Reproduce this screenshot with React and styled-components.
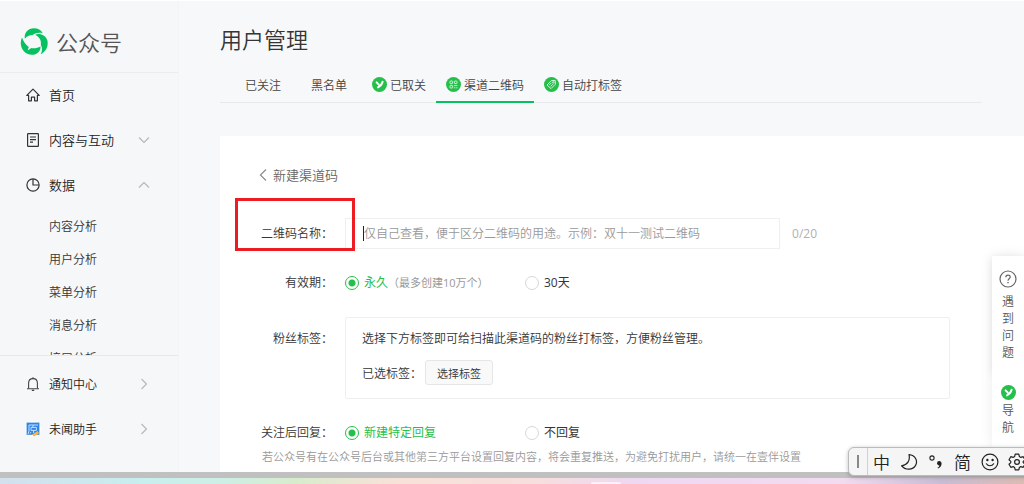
import React, { useState } from "react";
import styled, { createGlobalStyle } from "styled-components";

const SUB_MENU = ["内容分析", "用户分析", "菜单分析", "消息分析", "接口分析"];

function Chevron({ dir }) {
    const paths = {
        down: "M1 3.5 L6 8.5 L11 3.5",
        up: "M1 8.5 L6 3.5 L11 8.5",
        right: "M3.5 1 L8.5 6 L3.5 11",
        left: "M7 0.5 L1.4 6 L7 11.5",
    };
    return (
        <svg width="12" height="12" viewBox="0 0 12 12" fill="none" stroke={dir === "left" ? "#888" : "#b4b6b9"} strokeWidth="1.1" aria-hidden="true">
            <path d={paths[dir]} />
        </svg>
    )
}

function BrandLogo() {
    return (
        <svg width="28" height="28" viewBox="0 0 28 28" aria-hidden="true">
            <g fill="#07c160">
                <path d="M4.8 10.8 C4 4.6 8 0.3 14 0.3 C18 0.3 21 2 22.8 5.2 C19 4.2 15.5 4.8 12.6 7 C9.5 7 6.8 8.2 4.8 10.8 Z" />
                <path d="M15 6.8 C20 4.8 25.6 7.2 27.4 12.5 C28.6 18 26 23.6 20.6 26.2 C22.4 22.6 22.6 20 20.8 17 C21.6 12.6 19.4 8.6 15 6.8 Z" />
                <path d="M2 9.6 C3.4 13.4 5.4 16.6 8.8 19 L7.6 22.4 L11.4 20 C14.4 20.6 17.6 20 20.6 18.4 C20.6 23 17 26.8 12 26.8 C3.6 26.8 -1.8 17.6 2 9.6 Z" />
            </g>
        </svg>
    )
}

function HomeIcon() {
    return (
        <svg width="14" height="14" viewBox="0 0 14 14" fill="none" stroke="#333" strokeWidth="1.2" strokeLinejoin="round" aria-hidden="true">
            <path d="M0.8 7.4 L7 1.2 L13.2 7.4 H11.4 V12.8 H8.6 V9.2 H5.4 V12.8 H2.6 V7.4 Z" />
        </svg>
    )
}

function DocIcon() {
    return (
        <svg width="14" height="14" viewBox="0 0 14 14" fill="none" stroke="#333" strokeWidth="1.2" aria-hidden="true">
            <rect x="1.6" y="0.6" width="10.8" height="12.8" rx="0.6" />
            <path d="M4 4 H10 M4 6.6 H10 M4 9.2 H7" />
        </svg>
    )
}

function PieIcon() {
    return (
        <svg width="14" height="14" viewBox="0 0 14 14" fill="none" stroke="#333" strokeWidth="1.2" aria-hidden="true">
            <circle cx="7" cy="7" r="6.1" />
            <path d="M7 0.9 V7 H13.1" />
        </svg>
    )
}

function BellIcon() {
    return (
        <svg width="14" height="14" viewBox="0 0 14 14" fill="none" stroke="#444" strokeWidth="1.1" aria-hidden="true">
            <path d="M2.6 11.6 V6.2 C2.6 3.4 4.4 1.6 7 1.6 C9.6 1.6 11.4 3.4 11.4 6.2 V11.6" />
            <path d="M1 11.8 H13 M7 0.2 V1.6 M5.8 13.4 H8.2" />
        </svg>
    )
}

function HelperIcon() {
    return (
        <svg width="16" height="16" viewBox="0 0 16 16" aria-hidden="true">
            <circle cx="8" cy="8" r="8" fill="#fff" />
            <rect x="1.6" y="1.6" width="12.8" height="12.2" fill="#2f86e6" />
            <path d="M4 4 H13 M4 4 V10 L3 13 M8.5 4 L7.5 6 M6 6.4 H11.4 V9.4 H6 Z M8.6 9.4 V12 M6 11 L5.2 12.4" fill="none" stroke="#d5e9ff" strokeWidth="0.9" />
            <path d="M7 13.4 L12.8 10 L14 12.2 L9 15.4 Z" fill="#f7b545" />
        </svg>
    )
}

function YIcon() {
    return (
        <svg width="15" height="15" viewBox="0 0 15 15" aria-hidden="true">
            <circle cx="7.5" cy="7.5" r="7.5" fill="#25bf4b" />
            <path d="M4.6 5.4 L6.6 7.4 M10.6 4.8 C10 7 8.4 9.2 6 10.4" fill="none" stroke="#fff" strokeWidth="2" strokeLinecap="round" />
        </svg>
    )
}

function QrIcon() {
    return (
        <svg width="15" height="15" viewBox="0 0 15 15" aria-hidden="true">
            <circle cx="7.5" cy="7.5" r="7.5" fill="#25bf4b" />
            <g fill="none" stroke="#d9f5df" strokeWidth="0.9">
                <rect x="4" y="4" width="2.6" height="2.6" rx="0.5" />
                <rect x="8.4" y="4" width="2.6" height="2.6" rx="0.5" />
                <rect x="4" y="8.4" width="2.6" height="2.6" rx="0.5" />
                <path d="M8 8.6 H11.4 M8 10.8 H9.4 M10.2 10.8 H11.4" />
            </g>
        </svg>
    )
}

function TagIcon() {
    return (
        <svg width="15" height="15" viewBox="0 0 15 15" aria-hidden="true">
            <circle cx="7.5" cy="7.5" r="7.5" fill="#25bf4b" />
            <g fill="none" stroke="#e4f8e8" strokeWidth="0.9" strokeLinejoin="round">
                <path d="M3 8 L7.4 3.6 L11.2 3.4 L11.4 7.2 L7 11.6 Z" />
                <circle cx="9.4" cy="5.4" r="0.8" />
                <path d="M5.2 8 L7.4 5.8 M6.6 9.4 L8.8 7.2" />
            </g>
        </svg>
    )
}

function QuestionIcon() {
    return (
        <svg width="18" height="18" viewBox="0 0 18 18" fill="none" stroke="#666" strokeWidth="1.2" aria-hidden="true">
            <circle cx="9" cy="9" r="8" />
            <path d="M6.8 7.2 C6.8 4.4 11.2 4.4 11.2 7.1 C11.2 8.8 9 8.8 9 10.8" />
            <path d="M9 12 V13.3" strokeWidth="1.4" />
        </svg>
    )
}

function MoonIcon() {
    return (
        <svg width="18" height="18" viewBox="0 0 18 18" fill="none" stroke="#222" strokeWidth="1.2" strokeLinejoin="round" aria-hidden="true">
            <path d="M9 1.6 C15.4 2 18 8 15.6 12.4 C12.8 17.2 5.4 17.4 1.6 12.8 C7.4 12 10.4 7.6 9 1.6 Z" />
        </svg>
    )
}

function PunctIcon() {
    return (
        <svg width="16" height="18" viewBox="0 0 16 18" aria-hidden="true">
            <circle cx="4" cy="5" r="2.1" fill="none" stroke="#222" strokeWidth="1.1" />
            <path d="M9 10.2 A2.3 2.3 0 1 1 13.6 10.4 C13.6 12.8 12 14.8 10 15.4 L9.6 14.6 C10.8 14 11.4 13.2 11.4 12.4 C10 12.4 9 11.4 9 10.2 Z" fill="#222" />
        </svg>
    )
}

function SmileIcon() {
    return (
        <svg width="18" height="18" viewBox="0 0 18 18" fill="none" stroke="#222" strokeWidth="1.2" strokeLinecap="round" aria-hidden="true">
            <circle cx="9" cy="9" r="7.9" />
            <path d="M5.4 10.8 C7 13.4 11 13.4 12.6 10.8" />
            <circle cx="6.4" cy="7" r="0.6" fill="#222" />
            <circle cx="11.6" cy="7" r="0.6" fill="#222" />
        </svg>
    )
}

function GearIcon() {
    return (
        <svg width="18" height="18" viewBox="0 0 18 18" fill="none" stroke="#222" strokeWidth="1.2" strokeLinejoin="round" aria-hidden="true">
            <path d="M7.2 1.2 H10.8 L11.4 3.6 L12.8 4.4 L15.2 3.7 L17 6.8 L15.2 8.4 V9.6 L17 11.2 L15.2 14.3 L12.8 13.6 L11.4 14.4 L10.8 16.8 H7.2 L6.6 14.4 L5.2 13.6 L2.8 14.3 L1 11.2 L2.8 9.6 V8.4 L1 6.8 L2.8 3.7 L5.2 4.4 L6.6 3.6 Z" />
            <circle cx="9" cy="9" r="2.4" />
        </svg>
    )
}

function Sidebar() {
    return (
        <Side>
            <Brand>
                <BrandLogo />
                <BrandName>公众号</BrandName>
            </Brand>
            <Nav>
                <NavItem href="#home"><HomeIcon /><NavText>首页</NavText></NavItem>
                <NavItem href="#content"><DocIcon /><NavText>内容与互动</NavText><Chevron dir="down" /></NavItem>
                <NavItem href="#data"><PieIcon /><NavText>数据</NavText><Chevron dir="up" /></NavItem>
                <SubList>
                    {SUB_MENU.map((name) => (
                        <li key={name}><SubItem href="#data">{name}</SubItem></li>
                    ))}
                </SubList>
            </Nav>
            <SideFooter>
                <NavItem href="#notice" $small><BellIcon /><NavText>通知中心</NavText><Chevron dir="right" /></NavItem>
                <NavItem href="#helper" $small><IconSlot><HelperIcon /></IconSlot><NavText>未闻助手</NavText><Chevron dir="right" /></NavItem>
            </SideFooter>
        </Side>
    )
}

function ChannelForm() {
    const [name, setName] = useState("");
    const [period, setPeriod] = useState("forever");
    const [reply, setReply] = useState("new");

    return (
        <Card>
            <BackLink href="#channel"><Chevron dir="left" />新建渠道码</BackLink>
            <Row>
                <RowLabel as="label" htmlFor="qrname">二维码名称：</RowLabel>
                <NameField>
                    <Caret />
                    <NameInput
                        id="qrname"
                        maxLength={20}
                        value={name}
                        onChange={(e) => setName(e.target.value)}
                        placeholder="仅自己查看，便于区分二维码的用途。示例：双十一测试二维码"
                    />
                </NameField>
                <Counter>{name.length}/20</Counter>
                <Highlight />
            </Row>
            <Row role="radiogroup" aria-labelledby="period">
                <RowLabel id="period">有效期：</RowLabel>
                <Options>
                    <Option $on={period === "forever"}>
                        <Radio name="period" checked={period === "forever"} onChange={() => setPeriod("forever")} />
                        <span>永久<Hint>（最多创建10万个）</Hint></span>
                    </Option>
                    <Option $on={period === "days"}>
                        <Radio name="period" checked={period === "days"} onChange={() => setPeriod("days")} />
                        30天
                    </Option>
                </Options>
            </Row>
            <Row $top>
                <RowLabel $boxed>粉丝标签：</RowLabel>
                <TagBox>
                    <TagText>选择下方标签即可给扫描此渠道码的粉丝打标签，方便粉丝管理。</TagText>
                    <TagLine>已选标签：<PickButton type="button">选择标签</PickButton></TagLine>
                </TagBox>
            </Row>
            <Row role="radiogroup" aria-labelledby="reply">
                <RowLabel id="reply">关注后回复：</RowLabel>
                <Options>
                    <Option $on={reply === "new"}>
                        <Radio name="reply" checked={reply === "new"} onChange={() => setReply("new")} />
                        新建特定回复
                    </Option>
                    <Option $on={reply === "none"}>
                        <Radio name="reply" checked={reply === "none"} onChange={() => setReply("none")} />
                        不回复
                    </Option>
                </Options>
            </Row>
            <Note>若公众号有在公众号后台或其他第三方平台设置回复内容，将会重复推送，为避免打扰用户，请统一在壹伴设置</Note>
        </Card>
    )
}

function App() {
    return (
        <Screen>
            <GlobalStyle />
            <Page>
                <Sidebar />
                <Main>
                    <Title>用户管理</Title>
                    <Tabs>
                        <Tab href="#followed">已关注</Tab>
                        <Tab href="#black">黑名单</Tab>
                        <Tab href="#left" $icon><YIcon />已取关</Tab>
                        <Tab href="#channel" $icon $active><QrIcon />渠道二维码</Tab>
                        <Tab href="#tag" $icon><TagIcon />自动打标签</Tab>
                    </Tabs>
                    <ChannelForm />
                </Main>
                <Dock>
                    <DockButton type="button" $raised><QuestionIcon /><DockText>遇到问题</DockText></DockButton>
                    <DockButton type="button"><YIcon /><DockText>导航</DockText></DockButton>
                </Dock>
            </Page>
            <WindowEdge />
            <Taskbar><TaskTab /></Taskbar>
            <ImeBar>
                <ImeHandle><ImeGrip /></ImeHandle>
                <ImeButton type="button">中</ImeButton>
                <ImeButton type="button" aria-label="半角"><MoonIcon /></ImeButton>
                <ImeButton type="button" aria-label="标点"><PunctIcon /></ImeButton>
                <ImeButton type="button">简</ImeButton>
                <ImeButton type="button" aria-label="表情"><SmileIcon /></ImeButton>
                <ImeButton type="button" aria-label="设置"><GearIcon /></ImeButton>
            </ImeBar>
        </Screen>
    )
}

const GlobalStyle = createGlobalStyle`
* { box-sizing: border-box; }
body {
    margin: 0;
    font-family: "Open Sans", "Noto Sans CJK SC", sans-serif;
    font-size: 12px;
    font-weight: 350;
    color: #353535;
}
a { color: inherit; text-decoration: none; }
button, input { font: inherit; color: inherit; }
svg { flex: none; display: block; }`

const Screen = styled.div`
position: relative;
display: flex;
flex-direction: column;
height: 100vh;
overflow: hidden;`

const Page = styled.div`
position: relative;
display: flex;
flex: 1;
min-height: 0;
overflow: hidden;
border-top: 1px solid #fff;
background-color: #f7f8fa;`

const Side = styled.aside`
display: flex;
flex-direction: column;
flex: none;
width: 179px;
background-color: #f6f7f9;
border-right: 1px solid #f3f4f6;`

const Brand = styled.div`
display: flex;
align-items: center;
gap: 8px;
height: 72px;
padding: 10px 20px 0;
flex: none;
border-bottom: 1px solid #ebecee;`

const BrandName = styled.span`
font-size: 22px;
line-height: 28px;
color: #555;`

const Nav = styled.nav`
flex: 1;
min-height: 0;
overflow: hidden;`

const NavItem = styled.a`
display: flex;
align-items: center;
gap: 9px;
height: 45px;
padding: 0 28px ${(props) => (props.$small ? "0" : "2px")} 26px;
font-size: ${(props) => (props.$small ? "12px" : "13px")};
color: #222;`

const NavText = styled.span`
flex: 1;`

const IconSlot = styled.span`
margin: 0 -1px;`

const SubList = styled.ul`
list-style: none;
margin: 0;
padding: 2px 0 0 49px;`

const SubItem = styled.a`
display: block;
line-height: 33px;`

const SideFooter = styled.div`
flex: none;
padding: 5px 0 21px;
border-top: 1px solid #e7e8ea;`

const Main = styled.main`
display: flex;
flex-direction: column;
flex: 1;
min-width: 0;
padding: 22px 0 0 41px;`

const Title = styled.h1`
margin: 0;
font-size: 22px;
font-weight: 350;
line-height: 32px;`

const Tabs = styled.nav`
display: flex;
margin: 11px 42px 33px 0;
padding-left: 10px;
border-bottom: 1px solid #e9eaec;`

const Tab = styled.a`
display: flex;
align-items: center;
gap: 3px;
height: 37px;
margin-bottom: -1px;
padding: 0 ${(props) => (props.$icon ? "10px" : "15px")};
color: #444;
box-shadow: ${(props) => (props.$active ? "inset 0 -2px #07c160" : "none")};`

const Card = styled.form`
flex: 1;
display: flex;
flex-direction: column;
gap: 22px;
min-height: 0;
padding: 27px 74px 0 39px;
background-color: #fff;`

const BackLink = styled.a`
display: flex;
align-items: center;
gap: 2px;
margin-bottom: 9px;
font-size: 13px;
line-height: 24px;
color: #666;`

const Row = styled.div`
position: relative;
display: flex;
flex: none;
align-items: ${(props) => (props.$top ? "flex-start" : "center")};
gap: 12px;`

const RowLabel = styled.span`
flex: none;
width: 74px;
line-height: 24px;
text-align: right;
padding-top: ${(props) => (props.$boxed ? "10px" : "0")};`

const NameField = styled.div`
display: flex;
align-items: center;
flex: 0 1 435px;
height: 31px;
padding: 0 16px;
border: 1px solid #efefef;`

const Caret = styled.span`
width: 1px;
height: 15px;
margin-left: 1px;
background-color: #222;`

const NameInput = styled.input`
flex: 1;
min-width: 0;
padding: 0;
border: 0;
outline: none;
background: none;

&::placeholder { color: #999; opacity: 1; }`

const Counter = styled.span`
font-weight: 400;
color: #b0b0b0;`

const Highlight = styled.div`
position: absolute;
left: -24px;
top: -20px;
width: 120px;
height: 53px;
border: 3px solid #ed1c24;
pointer-events: none;`

const Options = styled.div`
display: grid;
grid-template-columns: 180px auto;`

const Option = styled.label`
display: flex;
align-items: center;
gap: 5px;
font-weight: 400;
line-height: 24px;
color: ${(props) => (props.$on ? "#25bf4b" : "#353535")};`

const Radio = styled.input.attrs({ type: "radio" })`
appearance: none;
width: 14px;
height: 14px;
margin: 0;
border: 1px solid #d8d8d8;
border-radius: 50%;

&:checked {
    border-color: #25bf4b;
    background: radial-gradient(circle, #25bf4b 3px, #fff 4px);
}`

const Hint = styled.span`
font-size: 11px;
color: #999;`

const TagBox = styled.div`
flex: 1;
padding: 9px 16px 13px;
border: 1px solid #efefef;
border-radius: 2px;`

const TagText = styled.p`
margin: 0 0 9px;
line-height: 24px;`

const TagLine = styled.div`
display: flex;
align-items: center;
gap: 3px;`

const PickButton = styled.button`
height: 25px;
padding: 0 11px;
font-size: 11px;
border: 1px solid #e6e6e6;
border-radius: 3px;
background-color: #f9f9f9;`

const Note = styled.p`
flex: none;
margin: -20px 0 0 3px;
font-size: 11px;
line-height: 20px;
white-space: nowrap;
color: #999;`

const Dock = styled.div`
position: absolute;
right: 0;
bottom: 25px;
width: 32px;
background-color: #fff;
box-shadow: 0 0 14px rgba(0, 0, 0, 0.08);`

const DockButton = styled.button`
display: flex;
flex-direction: column;
align-items: center;
gap: ${(props) => (props.$raised ? "5px" : "2px")};
width: 100%;
padding: ${(props) => (props.$raised ? "14px 0 11px" : "13px 0 11px")};
border: 0;
background-color: #fff;
box-shadow: ${(props) => (props.$raised ? "0 2px 8px rgba(0, 0, 0, 0.08)" : "none")};`

const DockText = styled.span`
width: 12px;
line-height: 17px;
color: #555;`

const WindowEdge = styled.div`
flex: none;
height: 6px;
background-color: #c0c0c0;`

const Taskbar = styled.div`
flex: none;
display: flex;
align-items: flex-end;
justify-content: center;
height: 6px;
padding-left: 188px;
background: linear-gradient(90deg, #d3e0ee, #c8eeee 14%, #cdeee4 22%, #d8eccc 29%, #f7e2d8 38%, #f7dfdd 52%, #efd8f2 62%, #f3dcf0 82%, #c8bcd4 92%, #dcbcb4);`

const TaskTab = styled.span`
width: 30px;
height: 2px;
border-radius: 2px 2px 0 0;
background-color: #faf0fa;`

const ImeBar = styled.div`
position: absolute;
right: -7px;
bottom: 8px;
display: flex;
height: 29px;
border: 1px solid #bbb;
border-radius: 6px;
overflow: hidden;
background-color: #f5f5f5;
box-shadow: 0 1px 4px rgba(0, 0, 0, 0.25);`

const ImeHandle = styled.span`
display: flex;
align-items: center;
justify-content: center;
width: 19px;
border-right: 1px solid #d0d0d0;`

const ImeGrip = styled.span`
width: 2px;
height: 13px;
background-color: #888;`

const ImeButton = styled.button`
display: flex;
align-items: center;
justify-content: center;
width: 27px;
padding: 0;
border: 0;
background: none;
font-size: 17px;
color: #222;`

export default App
